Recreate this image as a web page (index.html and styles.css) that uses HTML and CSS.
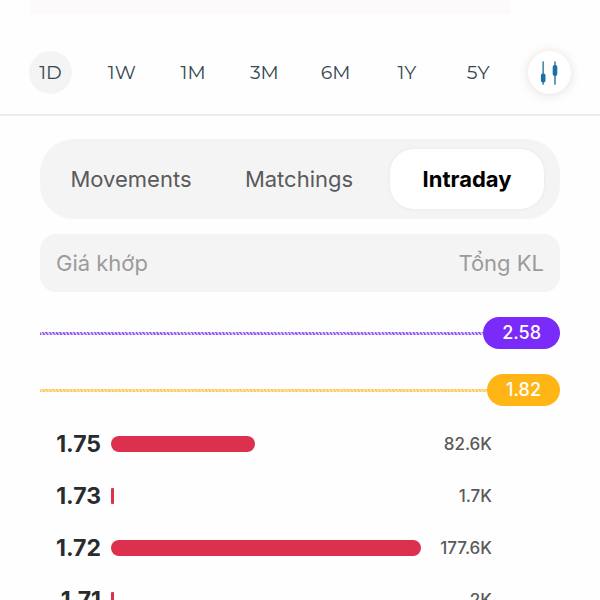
FILE: index.html
```html
<!DOCTYPE html>
<html lang="vi">
<head>
    <meta charset="UTF-8">
    <meta name="viewport" content="width=device-width, initial-scale=1.0">
    <title>Intraday</title>
    <link rel="stylesheet" href="styles.css">
</head>
<body>
    <div class="screen">
        <div class="chart-area"></div>

        <div class="range-bar">
            <button type="button" class="range active">1D</button>
            <button type="button" class="range">1W</button>
            <button type="button" class="range">1M</button>
            <button type="button" class="range">3M</button>
            <button type="button" class="range">6M</button>
            <button type="button" class="range">1Y</button>
            <button type="button" class="range">5Y</button>
            <button type="button" class="range chart-type" aria-label="Candlestick">
                <svg width="18" height="24" viewBox="0 0 18 24">
                    <path d="M3.2 1v22M15 1v22" stroke="#4c8bb0" stroke-width="1.7" stroke-linecap="round"/>
                    <rect x="0.9" y="12.5" width="4.6" height="9" rx="2" fill="#1d6fa5"/>
                    <rect x="12.7" y="4" width="4.6" height="11" rx="2" fill="#1d6fa5"/>
                </svg>
            </button>
        </div>

        <div class="content">
            <div class="tabs">
                <button type="button" class="tab">Movements</button>
                <button type="button" class="tab">Matchings</button>
                <button type="button" class="tab active">Intraday</button>
            </div>

            <table class="price-table">
                <thead>
                    <tr class="table-head">
                        <th>Giá khớp</th>
                        <th>Tổng KL</th>
                    </tr>
                </thead>
                <tbody>
                    <tr class="limit ceiling">
                        <td class="limit-line"></td>
                        <td class="limit-price">2.58</td>
                    </tr>
                    <tr class="limit reference">
                        <td class="limit-line"></td>
                        <td class="limit-price">1.82</td>
                    </tr>
                    <tr class="row">
                        <td class="price">1.75</td>
                        <td class="track"><div class="bar" style="width: 46.5%"></div></td>
                        <td class="volume">82.6K</td>
                    </tr>
                    <tr class="row">
                        <td class="price">1.73</td>
                        <td class="track"><div class="bar small" style="width: 1%"></div></td>
                        <td class="volume">1.7K</td>
                    </tr>
                    <tr class="row">
                        <td class="price">1.72</td>
                        <td class="track"><div class="bar" style="width: 100%"></div></td>
                        <td class="volume">177.6K</td>
                    </tr>
                    <tr class="row">
                        <td class="price">1.71</td>
                        <td class="track"><div class="bar small" style="width: 1%"></div></td>
                        <td class="volume">2K</td>
                    </tr>
                </tbody>
            </table>
        </div>
    </div>
</body>
</html>
```
FILE: styles.css
```css
* {
    box-sizing: border-box;
}
body {
    margin: 0;
    background-color: #fefefe;
    font-family: Inter, "Liberation Sans", sans-serif;
    color: #292c2e;
}
button {
    border: none;
    padding: 0;
    background: none;
    font-family: inherit;
    cursor: pointer;
}
.screen {
    height: 100vh;
    overflow: hidden;
}
.chart-area {
    height: 14px;
    margin: 0 90px 0 30px;
    background-color: #fefafb;
}

/* time range */
.range-bar {
    display: flex;
    justify-content: space-between;
    padding: 37px 29px 20px;
    border-bottom: 2px solid #ececec;
}
.range {
    display: flex;
    align-items: center;
    justify-content: center;
    width: 43px;
    height: 43px;
    border-radius: 50%;
    font-family: Montserrat, Inter, sans-serif;
    font-size: 19px;
    color: #36474f;
}
.range.active {
    background-color: #f4f4f4;
}
.chart-type {
    background-color: #fff;
    box-shadow: 0 1px 12px rgba(0,0,0,0.12);
}

.content {
    padding: 23px 40px 0;
}
.tabs {
    display: flex;
    gap: 14px;
    padding: 10px 16px 10px 14px;
    border-radius: 34px;
    background-color: #f4f4f4;
}
.tab {
    flex: 1;
    height: 60px;
    border-radius: 24px;
    font-size: 22px;
    color: #5a5a5a;
}
.tab.active {
    background-color: #fff;
    box-shadow: 0 0 4px rgba(0,0,0,0.06);
    font-weight: 700;
    color: #000;
}

/* matched prices */
.price-table,
.price-table thead,
.price-table tbody {
    display: block;
}
.price-table th,
.price-table td {
    padding: 0;
}
.table-head {
    display: flex;
    align-items: center;
    justify-content: space-between;
    height: 58px;
    margin: 15px 0 25px;
    padding: 0 16px;
    border-radius: 16px;
    background-color: #f4f4f4;
    font-size: 22px;
    color: #9b9b9b;
}
.table-head th {
    font-weight: 400;
}
.limit {
    display: flex;
    align-items: center;
    height: 32px;
    margin-bottom: 25px;
}
.limit-line {
    flex: 1;
    height: 3px;
}
.limit-price {
    height: 32px;
    line-height: 32px;
    border-radius: 16px;
    font-size: 18px;
    font-weight: 500;
    text-align: center;
    color: #fff;
}
.limit .limit-price {
    padding: 0 19px;
}
.ceiling .limit-line {
    background: repeating-linear-gradient(60deg, #8f57f5 0, #8f57f5 1px, #dccafb 2px, #dccafb 3px);
}
.ceiling .limit-price {
    background-color: #7b2bf9;
}
.reference .limit-line {
    background: repeating-linear-gradient(60deg, #fcca5c 0, #fcca5c 1px, #fde3a6 2px, #fde3a6 3px);
}
.reference .limit-price {
    background-color: #ffb515;
}
.row {
    display: flex;
    align-items: center;
    height: 52px;
    padding: 0 68px 0 0;
}
.limit + .row {
    margin-top: -13px;
}
.price {
    width: 61px;
    font-size: 23px;
    font-weight: 700;
    text-align: right;
}
.track {
    flex: 1;
    margin-left: 10px;
}
.bar {
    height: 16px;
    border-radius: 8px;
    background-color: #dc304f;
}
.bar.small {
    border-radius: 1px;
}
.volume {
    width: 71px;
    font-size: 17px;
    font-weight: 500;
    text-align: right;
    color: #5a5a5a;
}
```
